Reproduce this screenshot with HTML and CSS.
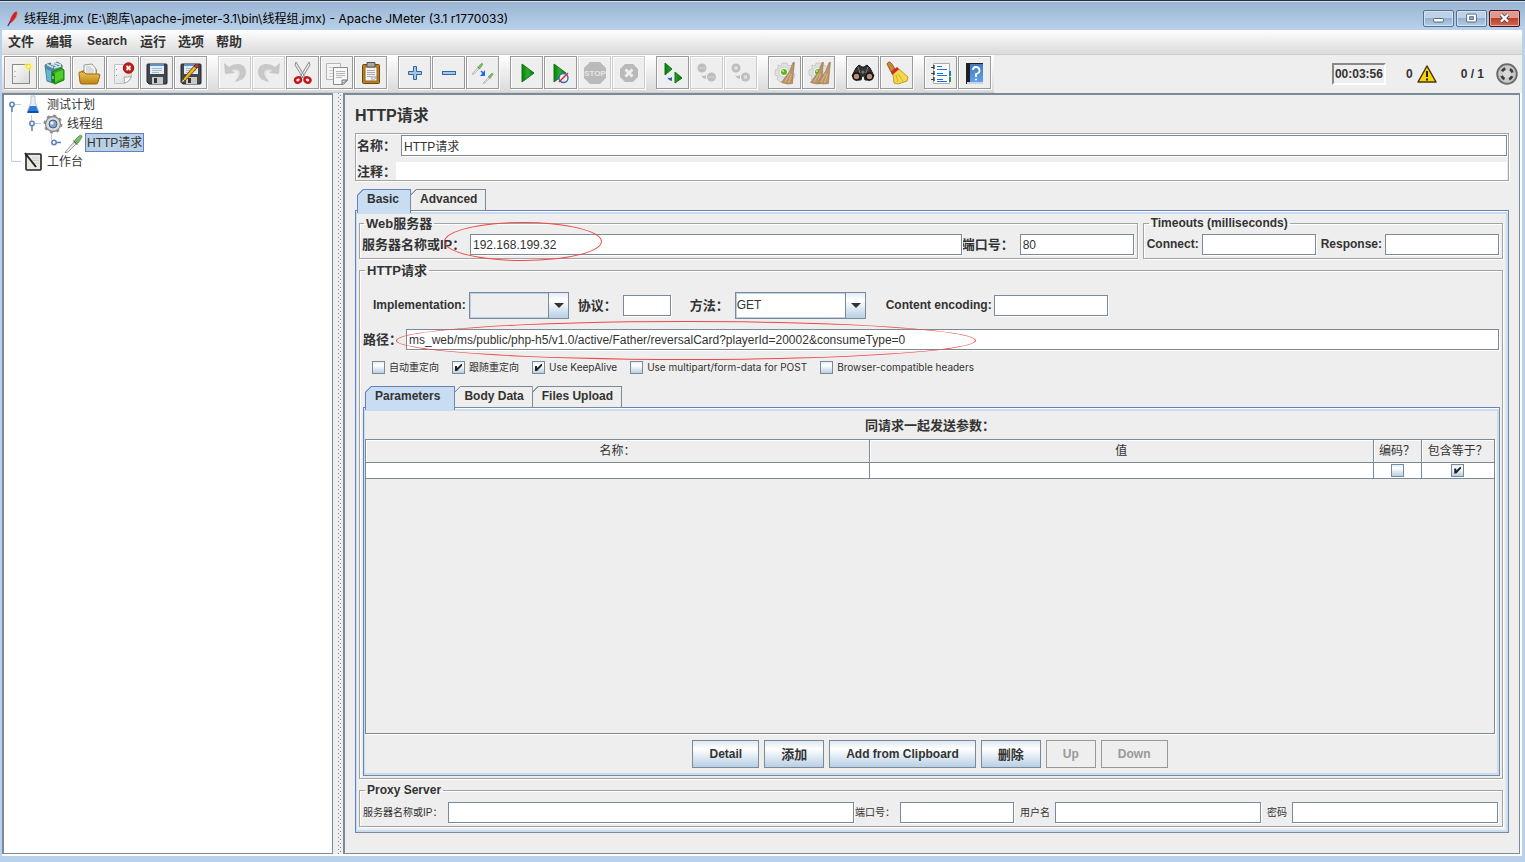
FILE: index.html
```
<!DOCTYPE html>
<html lang="zh-CN">
<head>
  <meta charset="UTF-8">
  <meta name="viewport" content="width=device-width, initial-scale=1.0">
  <title>Apache JMeter (3.1 r1770033)</title>
  <link rel="stylesheet" href="styles.css">
</head>
<body>
  <!-- shared gradients and icon parts -->
  <svg class="defs" width="0" height="0" aria-hidden="true">
    <defs>
      <linearGradient id="paper" x1="0" y1="0" x2="1" y2="1"><stop offset="0" stop-color="#fdfdfd"/><stop offset="1" stop-color="#d8d8d8"/></linearGradient>
      <linearGradient id="gold" x1="0" y1="0" x2="0" y2="1"><stop offset="0" stop-color="#ecc259"/><stop offset="1" stop-color="#bd8310"/></linearGradient>
      <linearGradient id="green" x1="0" y1="0" x2="1" y2="0"><stop offset="0" stop-color="#0b7a10"/><stop offset="0.5" stop-color="#2fae2f"/><stop offset="1" stop-color="#0b6a10"/></linearGradient>
      <linearGradient id="book" x1="0" y1="0" x2="0" y2="1"><stop offset="0" stop-color="#3f78c4"/><stop offset="1" stop-color="#64a0e6"/></linearGradient>
      <g id="floppy">
        <path d="M2 4q0-1 1-1h18q1 0 1 1v18q0 1-1 1H4l-2-2z" fill="#41474d" stroke="#23272b"/>
        <path d="M5 3h14v10H5z" fill="#e4ecf3"/><path d="M5 3h14v2H5z" fill="#5f8fc4"/>
        <path d="M7 7.500h10M7 9.500h10M7 11.500h7" stroke="#a9bccd"/>
        <path d="M7 16h11v7H7z" fill="#c9c9c9"/><path d="M9 17h3v5H9z" fill="#333"/>
      </g>
      <g id="gearball">
        <path d="M9 2h5l1 3 3-1 3 4-2 3 3 2-1 4-3 1-1 3-4 1-2-2-4 1-3-3 1-3-3-1V9l3-1V4l3 1z" fill="#e0e2e0" stroke="#bfc4c1" stroke-width="0.800"/>
        <circle cx="11" cy="11" r="5" fill="#f5f5f5" stroke="#c9cdc9"/><circle cx="11" cy="11" r="3" fill="#62b51b"/><circle cx="10" cy="10" r="1" fill="#c3f08c"/>
      </g>
      <g id="broom">
        <path d="M20 1.500l1.500 0-1 8-1 13-5 .5-6-1.500 5-7 3-4z" fill="#bd9468" stroke="#94704a" stroke-width="0.600"/>
        <path d="M17 12l-5 9M18.500 13l-3 9" stroke="#dcc09b" stroke-width="0.800"/>
      </g>
      <g id="dropper">
        <path d="M3 18l8-9 2 2-8 8-3 1z" fill="#e6ebe7" stroke="#8d948f" stroke-width="0.900"/>
        <path d="M10.500 7.500l4 4" stroke="#56764f" stroke-width="1.600"/><path d="M12 7l4-4q3-2 3 1l-4 6z" fill="#74c063" stroke="#4d9242" stroke-width="0.800"/>
      </g>
    </defs>
  </svg>

  <header class="titlebar">
    <svg class="app-icon" viewBox="0 0 16 20"><path d="M4 14C5 7 9 2 12 1c2 3-1 9-6 13z" fill="#d22128"/><path d="M12 1c2 2 1 6-2 9" stroke="#f08a2c" fill="none"/><path d="M5 13L2 18" stroke="#6b1c62" stroke-width="1.500" fill="none"/></svg>
    <h1 class="window-title">线程组.jmx (E:\跑库\apache-jmeter-3.1\bin\线程组.jmx) - Apache JMeter (3.1 r1770033)</h1>
    <button class="win-btn" aria-label="Minimize"><svg viewBox="0 0 30 17"><rect x="9.500" y="8.500" width="11" height="4" rx="1" fill="#fff" stroke="#47566b"/></svg></button>
    <button class="win-btn" aria-label="Maximize"><svg viewBox="0 0 30 17"><rect x="9.500" y="3.500" width="11" height="9" rx="1" fill="#fff" stroke="#47566b"/><rect x="13" y="6.500" width="4" height="3" fill="#9db8d6" stroke="#47566b"/></svg></button>
    <button class="win-btn win-close" aria-label="Close"><svg viewBox="0 0 30 17"><path d="M11 4l8 8m0-8l-8 8" stroke="#54404a" stroke-width="4.500"/><path d="M11 4l8 8m0-8l-8 8" stroke="#fff" stroke-width="2.600"/></svg></button>
  </header>

  <div class="window">
    <nav class="menubar">
      <button>文件</button>
      <button>编辑</button>
      <button class="latin">Search</button>
      <button>运行</button>
      <button>选项</button>
      <button>帮助</button>
    </nav>

    <div class="toolbar">
      <div class="tools">
        <div class="tool-group">
          <button class="tool" aria-label="New"><svg viewBox="0 0 24 24"><rect x="3.500" y="3.500" width="17" height="19" fill="url(#paper)" stroke="#8a8a8a"/><path d="M6 10v1M6 15v1" stroke="#888"/><circle cx="19.500" cy="5.500" r="4.500" fill="#fff27a" opacity="0.600"/><circle cx="19.500" cy="5.500" r="2.500" fill="#f6e21c"/><circle cx="19.500" cy="5.500" r="1.200" fill="#fff"/></svg></button>
          <button class="tool" aria-label="Templates"><svg viewBox="0 0 24 24"><path d="M2 4l5-2 3 2 4-3 5 3v10l-9 8-6-2z" fill="#4b8ca6" stroke="#4c7b8e"/><path d="M4 3.500l6 3M8 3l6 2M12 2l6 2M11 7l7-2" stroke="#d9e2e5" stroke-width="1.500"/><path d="M3 8l5 2v11l-4-2z" fill="#66b4d4"/><path d="M9 11l9-4 3 2v10l-9 4-3-2z" fill="#34ab1c" stroke="#1c7d12"/><path d="M12 12l8-3v8l-8 4z" fill="#54ce2b"/><path d="M9 11l3 2v9l-3-1z" fill="#168412"/><path d="M10 15v3" stroke="#d7f5cf"/></svg></button>
          <button class="tool" aria-label="Open"><svg viewBox="0 0 24 24"><path d="M4 10l3-1V5h6l2-1 5 5v10H4z" fill="#b57c11"/><path d="M7 4l8-1 4 5v6H7z" fill="#f7f7f7" stroke="#999"/><path d="M9 6h5M9 8h7M9 10h8M9 12h8" stroke="#bbb"/><path d="M2 12q0-1 1-1h4l2 2h12q2 0 2 1l-2 7q0 2-2 2H5q-2 0-2-2z" fill="url(#gold)" stroke="#9a6a0d"/></svg></button>
          <button class="tool" aria-label="Close"><svg viewBox="0 0 24 24"><path d="M3.500 3.500h17V15q-1 6-8 7.500h-9z" fill="url(#paper)" stroke="#c4c4c4"/><path d="M13 22q1-3 0-6 4 1 7-1-1 6-7 7z" fill="#fff" stroke="#aaa"/><path d="M5.500 8v1M5.500 14v1" stroke="#888"/><circle cx="17.500" cy="7" r="5.200" fill="#c71f16" stroke="#98100a"/><path d="M15.500 5l4 4m0-4l-4 4" stroke="#fff" stroke-width="1.800"/></svg></button>
          <button class="tool" aria-label="Save"><svg viewBox="0 0 24 24"><use href="#floppy"/></svg></button>
          <button class="tool" aria-label="Save as"><svg viewBox="0 0 24 24"><use href="#floppy"/><path d="M15 5l3 2L6 20l-4 2 2-4z" fill="#f0b31c" stroke="#4b3508" stroke-width="0.800"/><path d="M15 5l2-2 3 2-2 2z" fill="#d63a2c" stroke="#6b1a10" stroke-width="0.800"/><path d="M4 18l2 2-4 2z" fill="#f4dfb5" stroke="#333" stroke-width="0.600"/></svg></button>
        </div>
        <div class="tool-group">
          <button class="tool" aria-label="Undo" disabled><svg viewBox="0 0 24 24"><path d="M1 2l1 11 10-1-3-3c6-2 9 2 7 6-1 2-3 3-4 6 6-1 11-4 11-10C23 2 12 1 6 6z" fill="#c8c8c8"/><path d="M9 10c5-2 8 2 6 6" stroke="#ddd" fill="none"/></svg></button>
          <button class="tool" aria-label="Redo" disabled><svg viewBox="0 0 24 24"><path d="M23 2l-1 11-10-1 3-3c-6-2-9 2-7 6 1 2 3 3 4 6-6-1-11-4-11-10C1 2 12 1 18 6z" fill="#c8c8c8"/><path d="M15 10c-5-2-8 2-6 6" stroke="#ddd" fill="none"/></svg></button>
          <button class="tool" aria-label="Cut"><svg viewBox="0 0 24 24"><path d="M5 1l9 15-2 1L4 4zM18 1l-9 15 2 1 8-13z" fill="#e8e8e8" stroke="#8d8d8d"/><ellipse cx="7" cy="19" rx="3" ry="2.500" fill="none" stroke="#c9131a" stroke-width="2.500" transform="rotate(-25 7 19)"/><ellipse cx="16.500" cy="19" rx="3" ry="2.500" fill="none" stroke="#c9131a" stroke-width="2.500" transform="rotate(25 16.500 19)"/></svg></button>
          <button class="tool" aria-label="Copy"><svg viewBox="0 0 24 24"><path d="M1.500 2.500h14v16h-14z" fill="#f4f4f4" stroke="#b5b5b5"/><path d="M4 6.500h8M4 9.500h5M4 12.500h5M4 15.500h5" stroke="#ccc"/><path d="M8.500 6.500h14v13l-4 4h-10z" fill="#f7f7f7" stroke="#8b8b8b"/><path d="M11 10.500h9M11 12.500h9M11 14.500h9M11 16.500h6" stroke="#b5b5b5"/><path d="M17 23v-4h5z" fill="#ddd" stroke="#777"/></svg></button>
          <button class="tool" aria-label="Paste"><svg viewBox="0 0 24 24"><rect x="3.500" y="3.500" width="17" height="19" rx="1" fill="#bb7c1b" stroke="#704706"/><path d="M6 6h12v14H6z" fill="#f3f3f3" stroke="#8d6a2e"/><path d="M8 1.500h8v4.500H8z" fill="#a6aaa3" stroke="#555"/><path d="M8 9.500h8M8 11.500h8M8 13.500h8M8 15.500h5" stroke="#aaa"/><path d="M13 20v-4h5z" fill="#fff" stroke="#999"/></svg></button>
        </div>
        <div class="tool-group">
          <button class="tool" aria-label="Expand all"><svg viewBox="0 0 24 24"><path d="M10.500 5.500h3v5h5v3h-5v5h-3v-5h-5v-3h5z" fill="#a8c5ea" stroke="#3465a4"/></svg></button>
          <button class="tool" aria-label="Collapse all"><svg viewBox="0 0 24 24"><rect x="5.500" y="10.500" width="13" height="3" fill="#a8c5ea" stroke="#3465a4"/></svg></button>
          <button class="tool" aria-label="Toggle"><svg viewBox="0 0 24 24"><g transform="translate(0 1) scale(.62)"><use href="#dropper"/></g><g transform="translate(11 11) scale(.58)"><use href="#dropper"/></g><path d="M10 10l3 3" stroke="#1c6ee8" stroke-width="1.600"/><path d="M14 9v6H9z" fill="#1c6ee8"/></svg></button>
        </div>
        <div class="tool-group">
          <button class="tool" aria-label="Start"><svg viewBox="0 0 24 24"><path d="M7 3l12 9L7 21z" fill="url(#green)" stroke="#0e7a12"/></svg></button>
          <button class="tool" aria-label="Start no pauses"><svg viewBox="0 0 24 24"><path d="M5 3l12 9-12 9z" fill="url(#green)" stroke="#0e7a12"/><circle cx="14.500" cy="17" r="4.500" fill="#eee" stroke="#2e6db3" stroke-width="1.400"/><path d="M10 21l9-9" stroke="#e0242c" stroke-width="1.500"/></svg></button>
          <button class="tool" aria-label="Stop" disabled><svg viewBox="0 0 24 24"><path d="M7 1h10l6 6v10l-6 6H7l-6-6V7z" fill="#bababa"/><text class="stop-text" x="12" y="15">STOP</text></svg></button>
          <button class="tool" aria-label="Shutdown" disabled><svg viewBox="0 0 24 24"><path d="M8 3h8l5 5v8l-5 5H8l-5-5V8z" fill="#b9b9b9"/><path d="M8.500 8.500l7 7m0-7l-7 7" stroke="#eee" stroke-width="3"/></svg></button>
        </div>
        <div class="tool-group">
          <button class="tool" aria-label="Remote start all"><svg viewBox="0 0 24 24"><path d="M4 2l7 6-7 6zM14 11l7 6-7 5z" fill="url(#green)" stroke="#0e7a12"/><path d="M6 16q2 2 5 0v4l-3-1z" fill="#3465a4"/></svg></button>
          <button class="tool" aria-label="Remote stop all" disabled><svg viewBox="0 0 24 24"><circle cx="7" cy="7" r="4.500" fill="#bdbdbd"/><circle cx="16.500" cy="16" r="4.500" fill="#bdbdbd"/><path d="M4 7h6M13.500 16h6" stroke="#d0d0d0" stroke-width="1.500"/><path d="M6 14q2 2 5 0v4l-3-1z" fill="#bdbdbd"/></svg></button>
          <button class="tool" aria-label="Remote shutdown all" disabled><svg viewBox="0 0 24 24"><circle cx="7" cy="7" r="4.500" fill="#bdbdbd"/><circle cx="16.500" cy="16" r="4.500" fill="#bdbdbd"/><path d="M5.500 5.500l3 3m0-3l-3 3M15 14.500l3 3m0-3l-3 3" stroke="#e8e8e8" stroke-width="1.300"/><path d="M6 14q2 2 5 0v4l-3-1z" fill="#bdbdbd"/></svg></button>
        </div>
        <div class="tool-group">
          <button class="tool" aria-label="Clear"><svg viewBox="0 0 24 24"><use href="#gearball"/><use href="#broom"/></svg></button>
          <button class="tool" aria-label="Clear all"><svg viewBox="0 0 24 24"><use href="#gearball"/><use href="#broom" x="-5"/><use href="#broom" x="2"/></svg></button>
        </div>
        <div class="tool-group">
          <button class="tool" aria-label="Search"><svg viewBox="0 0 24 24"><path d="M5 7l3-3 3 2h2l3-2 3 3 4 8-4 4h-5l-1-4h-2l-1 4H5l-4-4z" fill="#343434" stroke="#161616"/><path d="M7 6l2 6M17 6l-2 6" stroke="#777"/><circle cx="5.500" cy="15.500" r="3.500" fill="#b98c79" stroke="#111" stroke-width="1.500"/><circle cx="18.500" cy="15.500" r="3.500" fill="#b98c79" stroke="#111" stroke-width="1.500"/><circle cx="12" cy="11" r="1.500" fill="#777"/></svg></button>
          <button class="tool" aria-label="Reset search"><svg viewBox="0 0 24 24"><path d="M2 3q2-4 5 0l3 5-4 3z" fill="#c98634" stroke="#82501a" stroke-width="0.800"/><path d="M8 13l6-5 9 8-1 4-9 3-4-1z" fill="#f3d94a" stroke="#b28a14" stroke-width="0.800"/><path d="M6 11l6-5 2 2-7 6z" fill="#d02424"/><path d="M11 14l2 7M13 13l5 7" stroke="#cba51c" stroke-width="0.800"/></svg></button>
        </div>
        <div class="tool-group">
          <button class="tool" aria-label="Function helper"><svg viewBox="0 0 24 24"><path d="M4.500 2.500h16v20h-16z" fill="#fff" stroke="#aaa"/><path d="M20 10h2v5h-2z" fill="#2277e0"/><path d="M20 16h2v5h-2z" fill="#2a9b28"/><path d="M8 5.500h5M8 8.500h10M8 12.500h6M8 14.500h10M8 18.500h6M8 20.500h10" stroke="#1a6fe0"/><path d="M2 6.500h3M2 12.500h3M2 18.500h3" stroke="#444"/><path d="M5 4v4M5 10v4M5 16v4" stroke="#222" stroke-width="1.200"/></svg></button>
          <button class="tool" aria-label="Help"><svg viewBox="0 0 24 24"><path d="M3 2h17v21H3z" fill="#1e1e24"/><path d="M7 3h13v18H7z" fill="url(#book)"/><path d="M4 21h16v2H4z" fill="#c9d4e2"/><path d="M10 9q0-3 3-3t3.500 3-3.500 4v3" stroke="#fff" stroke-width="1.800" fill="none"/><circle cx="13" cy="18.500" r="1" fill="#fff"/></svg></button>
        </div>
      </div>
      <div class="status">
        <output class="timer">00:03:56</output>
        <span class="warn-count">0</span>
        <svg class="warn" viewBox="0 0 20 18"><path d="M10 1l9 16H1z" fill="#fbd20b" stroke="#45380a" stroke-width="1.500" stroke-linejoin="round"/><path d="M10 6v6M10 13.500v2" stroke="#222" stroke-width="2"/></svg>
        <span class="threads">0 / 1</span>
        <svg class="remote" viewBox="0 0 22 22"><circle cx="11" cy="11" r="10" fill="#9b9b9b" stroke="#666" stroke-width="1.500"/><circle cx="11" cy="11" r="8.500" fill="#c9c9c9"/><circle cx="11" cy="11" r="5.500" fill="none" stroke="#3d3d3d" stroke-width="3" stroke-dasharray="4 4.640" stroke-dashoffset="-2.300"/><circle cx="11" cy="11" r="4" fill="#d9d9d9"/></svg>
      </div>
    </div>

    <main class="main">
      <aside class="tree">
        <svg class="tree-lines" width="60" height="70" viewBox="0 0 60 70"><g fill="none" stroke="#b8cfe5"><path d="M7.500 12v54.500H17M11 9.500h6M27.500 20v8M31 28.500h6M47.500 38v7"/></g><g fill="#fff" stroke="#5c7fc0" stroke-width="1.500"><path d="M8 12v5M28 31v5M52 47.500h5"/><circle cx="8" cy="9.500" r="2.200"/><circle cx="28" cy="28.500" r="2.200"/><circle cx="50" cy="47.500" r="2.200"/></g></svg>
        <ul>
          <li class="depth-1"><svg viewBox="0 0 20 20"><path d="M8 1h4v6l4 10H4L8 7z" fill="#e8eef4" stroke="#b9c5d0"/><path d="M7 11h6l3 7H4z" fill="#2a7bd8"/><path d="M5 16h10v2H5z" fill="#0f4fae"/></svg><span>测试计划</span></li>
          <li class="depth-2"><svg viewBox="0 0 20 20"><circle cx="10" cy="10" r="7.500" fill="#ddd" stroke="#888" stroke-width="1.300"/><circle cx="10" cy="10" r="8.500" fill="none" stroke="#8d8d8d" stroke-width="2" stroke-dasharray="3 3.670"/><circle cx="10" cy="10" r="4" fill="#7da2ce" stroke="#4b5f7c"/><circle cx="9" cy="9" r="1.800" fill="#eaf2fb"/></svg><span>线程组</span></li>
          <li class="depth-3"><svg viewBox="0 0 20 20"><use href="#dropper"/></svg><span class="selected">HTTP请求</span></li>
          <li class="depth-1"><svg viewBox="0 0 20 20"><rect x="3" y="2" width="15" height="16" rx="1" fill="#e9e9e4" stroke="#222" stroke-width="1.600"/><path d="M9 6h7M9 8.500h7M11 11h5" stroke="#ccc"/><path d="M2 1l11 14" stroke="#222" stroke-width="2"/></svg><span>工作台</span></li>
        </ul>
      </aside>
      <div class="splitter"></div>

      <section class="editor">
        <h2>HTTP请求</h2>
        <div class="naming">
          <div class="naming-row"><label for="name">名称：</label><input class="field grow" id="name" value="HTTP请求"></div>
          <div class="naming-row comment"><label for="comment">注释：</label><input class="grow" id="comment"></div>
        </div>

        <div class="tabs">
          <button class="tab active">Basic</button>
          <button class="tab">Advanced</button>
        </div>
        <div class="tab-panel basic">
          <div class="servers">
            <fieldset class="web-server">
              <legend class="cjk">Web服务器</legend>
              <label class="cjk host-label" for="host">服务器名称或IP：</label>
              <div class="marked grow">
                <input class="field" id="host" value="192.168.199.32">
                <span class="oval host-oval"></span>
              </div>
              <label class="cjk port-label" for="port">端口号：</label>
              <input class="field short" id="port" value="80">
            </fieldset>
            <fieldset class="timeouts">
              <legend>Timeouts (milliseconds)</legend>
              <label for="connect">Connect:</label>
              <input class="field short" id="connect">
              <label for="response">Response:</label>
              <input class="field short" id="response">
            </fieldset>
          </div>

          <fieldset class="request">
            <legend class="cjk">HTTP请求</legend>
            <div class="request-row">
              <label for="impl">Implementation:</label>
              <span class="combo impl"><select id="impl"><option></option></select></span>
              <label class="cjk protocol-label" for="protocol">协议：</label>
              <input class="field tiny" id="protocol">
              <label class="cjk method-label" for="method">方法：</label>
              <span class="combo method"><select id="method"><option>GET</option></select></span>
              <label class="encoding-label" for="encoding">Content encoding:</label>
              <input class="field short" id="encoding">
            </div>
            <div class="path-row">
              <label class="cjk" for="path">路径：</label>
              <div class="marked grow">
                <input class="field" id="path" value="ms_web/ms/public/php-h5/v1.0/active/Father/reversalCard?playerId=20002&amp;consumeType=0">
                <span class="oval path-oval"></span>
              </div>
            </div>
            <div class="checks">
              <label><input type="checkbox">自动重定向</label>
              <label><input type="checkbox" checked>跟随重定向</label>
              <label><input type="checkbox" checked><span>Use KeepAlive</span></label>
              <label><input type="checkbox"><span>Use multipart/form-data for POST</span></label>
              <label><input type="checkbox"><span>Browser-compatible headers</span></label>
            </div>

            <div class="tabs inner">
              <button class="tab active">Parameters</button>
              <button class="tab">Body Data</button>
              <button class="tab">Files Upload</button>
            </div>
            <div class="tab-panel params">
              <h3 class="cjk">同请求一起发送参数：</h3>
              <div class="table-area">
                <table>
                  <thead>
                    <tr><th>名称：</th><th>值</th><th class="col-encode">编码？</th><th class="col-equals">包含等于？</th></tr>
                  </thead>
                  <tbody>
                    <tr><td></td><td></td><td><input type="checkbox" aria-label="编码"></td><td><input type="checkbox" aria-label="包含等于" checked></td></tr>
                  </tbody>
                </table>
              </div>
              <div class="actions">
                <button>Detail</button>
                <button class="cjk">添加</button>
                <button>Add from Clipboard</button>
                <button class="cjk">删除</button>
                <button disabled>Up</button>
                <button disabled>Down</button>
              </div>
            </div>
          </fieldset>

          <fieldset class="proxy">
            <legend>Proxy Server</legend>
            <label class="proxy-host" for="proxy-host">服务器名称或IP：</label>
            <input class="field proxy-wide" id="proxy-host">
            <label class="proxy-port" for="proxy-port">端口号：</label>
            <input class="field short" id="proxy-port">
            <label class="proxy-user" for="proxy-user">用户名</label>
            <input class="field proxy-half" id="proxy-user">
            <label class="proxy-pass" for="proxy-pass">密码</label>
            <input class="field proxy-half" type="password" id="proxy-pass">
          </fieldset>
        </div>
      </section>
    </main>
  </div>
</body>
</html>
```
FILE: styles.css
```
* {
  margin: 0;
  padding: 0;
  box-sizing: border-box;
}

body {
  display: flex;
  flex-direction: column;
  height: 100vh;
  overflow: hidden;
  border-top: 1px solid #2b2f38;
  background: #b9d1ea;
  color: #333;
  font: bold 12px/15px "Liberation Sans", "Noto Sans CJK SC", sans-serif;
}

button,
input,
select {
  font: inherit;
  color: inherit;
}

input,
select {
  font-weight: normal;
}

.defs {
  position: absolute;
}

.grow {
  flex: 1;
  min-width: 0;
}

.cjk {
  font-size: 13px;
}

/* title bar */
.titlebar {
  display: flex;
  align-items: center;
  height: 29px;
  padding: 6px 5px 0 6px;
  background: linear-gradient(#98b4d2, #b9d1ea);
  box-shadow: inset 0 1px #d3e0ee;
  color: #000;
}

.app-icon {
  width: 14px;
  height: 18px;
}

.window-title {
  flex: 1;
  margin-left: 4px;
  font: 12px/18px Inter, "Noto Sans CJK SC", sans-serif;
}

.win-btn {
  width: 31px;
  height: 17px;
  margin-left: 2px;
  border: 1px solid #56708f;
  border-radius: 2px;
  background: linear-gradient(#bdd1e8 50%, #93b1d1 50%, #b4cee9);
  box-shadow: inset 0 0 0 1px #d3e3f3;
}

.win-btn svg {
  display: block;
  width: 100%;
  height: 100%;
}

.win-close {
  border-color: #45131f;
  background: linear-gradient(#dd9a8f 45%, #bd3f27 50%, #cf6c50);
  box-shadow: inset 0 0 0 1px #e6a99c;
}

.window {
  flex: 1;
  display: flex;
  flex-direction: column;
  min-height: 0;
  margin: 0 3px 6px 2px;
  background: #eee;
}

/* menu */
.menubar {
  display: flex;
  height: 25px;
  border-bottom: 1px solid #ccc;
  background: linear-gradient(#fff, #dadada);
}

.menubar button {
  padding: 0 6px 2px;
  border: none;
  background: none;
  font-size: 13px;
}

.menubar button.latin {
  padding: 0 7px 2px 9px;
  font-size: 12px;
}

/* toolbar */
.toolbar {
  display: flex;
  justify-content: space-between;
  height: 38px;
}

.tools {
  display: flex;
  gap: 10px;
  padding: 1px 2px 0;
  border-bottom: 1px solid #ccc;
  background: linear-gradient(#fff, #dadada);
}

.tool-group {
  display: flex;
}

.tool {
  display: flex;
  align-items: center;
  justify-content: center;
  width: 33px;
  height: 33px;
  margin-right: 1px;
  border: 1px solid #999;
  background: #eee;
  box-shadow: 1px 1px #fff, inset 1px 1px #fff;
}

.tool:disabled {
  border-color: #ccc;
}

.tool svg {
  width: 24px;
  height: 24px;
}

.stop-text {
  fill: #e6e6e6;
  font-size: 8px;
  text-anchor: middle;
}

.status {
  display: flex;
  align-items: center;
  padding-right: 4px;
}

.timer {
  height: 22px;
  padding: 2px 1px;
  border: 2px solid;
  border-color: #8a8a8a #fff #fff #8a8a8a;
}

.warn-count {
  margin: 0 4px 0 20px;
}

.warn {
  width: 20px;
  height: 18px;
}

.threads {
  margin: 0 12px 0 24px;
}

.remote {
  width: 22px;
  height: 22px;
}

/* main split */
.main {
  flex: 1;
  display: flex;
  min-height: 0;
  padding-bottom: 2px;
  background: #fff;
}

.tree {
  position: relative;
  width: 331px;
  border: 1px solid #7a8a99;
  border-width: 2px 1px 1px 2px;
  font-weight: normal;
}

.tree-lines {
  position: absolute;
  left: 0;
  top: 0;
}

.tree ul {
  list-style: none;
}

.tree li {
  display: flex;
  align-items: center;
  gap: 2px;
  height: 19px;
}

.tree li svg {
  width: 20px;
  height: 20px;
}

.tree span {
  padding: 2px 1px 0;
  border: 1px solid transparent;
}

.tree .selected {
  border-color: #6382bf;
  background: #b8cfe5;
}

.depth-1 {
  padding-left: 19px;
}

.depth-2 {
  padding-left: 39px;
}

.depth-3 {
  padding-left: 59px;
}

/* two staggered columns of grip dots */
.splitter {
  width: 10px;
  background-color: #eee;
  background-image: conic-gradient(at 1px 1px, transparent 75%, #7a8a99 0), conic-gradient(at 1px 1px, transparent 75%, #7a8a99 0);
  background-position: 5px 0, 7px 2px;
  background-repeat: repeat-y;
  background-size: 10px 4px;
}

.editor {
  flex: 1;
  display: flex;
  flex-direction: column;
  min-width: 0;
  margin-right: 2px;
  padding: 11px 10px 20px;
  border: 1px solid #7a8a99;
  border-width: 2px 1px 1px 2px;
  background: #eee;
}

.editor h2 {
  margin-bottom: 7px;
  font-size: 16px;
  line-height: 20px;
}

/* text boxes */
.field {
  width: 100%;
  height: 21px;
  padding: 0 2px;
  border: 1px solid #7a8a99;
  background: #fff;
  box-shadow: 1px 1px #fff;
}

.field.grow {
  width: auto;
}

.field.short {
  width: 114px;
}

.field.tiny {
  width: 48px;
}

.naming {
  display: flex;
  flex-direction: column;
  gap: 6px;
  margin-bottom: 8px;
  padding: 1px 1px 0;
  border: 1px solid #a3a3a3;
  box-shadow: 1px 1px #fff, inset 1px 1px #fff;
}

.naming-row {
  display: flex;
  align-items: center;
}

.naming-row label {
  width: 44px;
  font-size: 13px;
}

.naming-row.comment label {
  width: 39px;
}

.comment input {
  height: 18px;
  border: none;
}

/* tabs */
.tabs {
  position: relative;
  display: flex;
  padding-left: 2px;
}

.tab {
  height: 22px;
  margin: 0 0 -1px -1px;
  padding: 0 8px 2px 9px;
  border: 1px solid #7a8a99;
  background: linear-gradient(135deg, #7a8a99 5px, #eee 5px) border-box;
  clip-path: polygon(6px 0, 100% 0, 100% 100%, 0 100%, 0 6px);
}

.tab.active {
  height: 24px;
  margin: 0 0 -3px;
  padding: 0 11px 4px 9px;
  border-color: #6382bf;
  border-bottom: none;
  background: linear-gradient(135deg, #6382bf 5px, #c8ddf2 5px) border-box;
}

.inner .tab.active {
  padding-right: 14px;
}

.tab-panel {
  border: 1px solid;
  border-color: #6382bf #7a8a99 #7a8a99 #6382bf;
  box-shadow: inset 0 1px #fff, inset 1px 3px #c8ddf2, inset -2px -2px #c8ddf2;
}

.basic {
  flex: 1;
  display: flex;
  flex-direction: column;
  gap: 4px;
  padding: 5px 5px 5px 3px;
}

/* titled groups */
fieldset {
  display: flex;
  align-items: center;
  min-width: 0;
  border: 1px solid #a3a3a3;
  box-shadow: 1px 1px #fff, inset 1px 1px #fff;
}

legend {
  height: 15px;
  margin-left: 2px;
  padding: 0 2px;
}

.servers {
  display: flex;
  gap: 5px;
}

.web-server {
  flex: 1;
  padding: 3px 3px 3px 2px;
}

.host-label {
  width: 108px;
}

.port-label {
  width: 58px;
}

.timeouts {
  padding: 3px;
}

.timeouts label {
  margin-right: 3px;
}

.timeouts .short + label {
  margin-left: 5px;
}

.request {
  flex: 1;
  flex-direction: column;
  align-items: stretch;
  padding: 14px 2px 2px 3px;
}

.request-row {
  display: flex;
  align-items: center;
  height: 27px;
  padding-left: 10px;
}

.combo {
  position: relative;
  height: 27px;
  margin: 0 9px 0 3px;
}

.combo.impl {
  width: 100px;
}

.combo.method {
  width: 131px;
  margin: 0 20px 0 0;
}

.combo select {
  appearance: none;
  width: 100%;
  height: 100%;
  padding-left: 1px;
  border: 1px solid #7a8a99;
  background: #eee;
  box-shadow: inset 0 0 0 1px #b8cfe5;
}

.combo.method select {
  background: #fff;
}

/* arrow box at the right end of a combo */
.combo::before {
  content: "";
  position: absolute;
  top: 1px;
  right: 1px;
  bottom: 1px;
  width: 19px;
  border-left: 1px solid #7a8a99;
  background: linear-gradient(#e3edf7, #fff 30%, #b8cfe5);
  pointer-events: none;
}

.combo::after {
  content: "";
  position: absolute;
  top: 11px;
  right: 5px;
  border: 5px solid transparent;
  border-top-color: #333;
  border-bottom: none;
  pointer-events: none;
}

.protocol-label {
  width: 45px;
}

.method-label {
  width: 45px;
  margin-left: 19px;
}

.encoding-label {
  margin-right: 2px;
}

.path-row {
  display: flex;
  align-items: center;
  margin: 10px 1px 10px 0;
}

.path-row label {
  width: 43px;
}

/* hand-drawn highlights over the fields */
.marked {
  position: relative;
  display: flex;
}

.oval {
  position: absolute;
  border: 1px solid #f04848;
  border-radius: 50%;
  pointer-events: none;
}

.host-oval {
  left: -26px;
  top: -12px;
  width: 158px;
  height: 39px;
}

.path-oval {
  left: -10px;
  top: -8px;
  width: 580px;
  height: 39px;
}

/* check boxes */
input[type="checkbox"] {
  appearance: none;
  position: relative;
  display: block;
  width: 13px;
  height: 13px;
  border: 1px solid #7a8a99;
  background: linear-gradient(#e3edf7, #fff 30%, #b8cfe5);
}

input[type="checkbox"]:checked::after {
  content: "";
  position: absolute;
  left: 2px;
  top: 2px;
  width: 7px;
  height: 7px;
  background: #222;
  clip-path: polygon(0 30%, 28% 30%, 30% 58%, 88% 0, 100% 0, 100% 24%, 30% 100%, 0 100%);
}

.checks {
  display: flex;
  align-items: center;
  gap: 13px;
  height: 15px;
  margin-bottom: 11px;
  padding-left: 9px;
  font-size: 10px;
  font-weight: normal;
}

.checks label {
  display: flex;
  align-items: center;
  gap: 4px;
}

.checks span {
  font-family: Inter, sans-serif;
}

.params {
  flex: 1;
  display: flex;
  flex-direction: column;
  padding: 8px 4px 7px 1px;
}

.params h3 {
  height: 23px;
  line-height: 19px;
  text-align: center;
}

.table-area {
  flex: 1;
  border: 1px solid #7a8a99;
  box-shadow: 1px 1px #fff;
}

table {
  width: 100%;
  table-layout: fixed;
  border-collapse: collapse;
}

th {
  height: 22px;
  padding-top: 2px;
  border: 1px solid #7a8a99;
  border-width: 0 0 1px 1px;
  box-shadow: inset 1px 1px #fff;
  font-weight: normal;
}

td {
  height: 16px;
  border: 1px solid #7a8a99;
  border-width: 0 0 1px 1px;
  background: #fff;
}

th:first-child,
td:first-child {
  border-left: none;
}

td input[type="checkbox"] {
  margin: 0 auto;
}

.col-encode {
  width: 48px;
}

.col-equals {
  width: 73px;
}

.actions {
  display: flex;
  justify-content: center;
  gap: 5px;
  margin-top: 6px;
}

.actions button {
  height: 28px;
  padding: 0 16px;
  border: 1px solid #7a8a99;
  background: linear-gradient(#dde8f3, #fff 30%, #b8cfe5);
}

.actions button:disabled {
  border-color: #999;
  background: #eee;
  color: #999;
}

.proxy {
  padding: 4px 4px 3px 3px;
}

.proxy label {
  flex: none;
  font-size: 10px;
  font-weight: normal;
}

.proxy-wide {
  flex: 2;
}

.proxy-half {
  flex: 1;
}

.proxy .proxy-host {
  width: 85px;
}

.proxy .proxy-port {
  width: 46px;
  padding-left: 1px;
}

.proxy .proxy-user {
  width: 41px;
  padding-left: 6px;
}

.proxy .proxy-pass {
  width: 31px;
  padding-left: 6px;
}
```
